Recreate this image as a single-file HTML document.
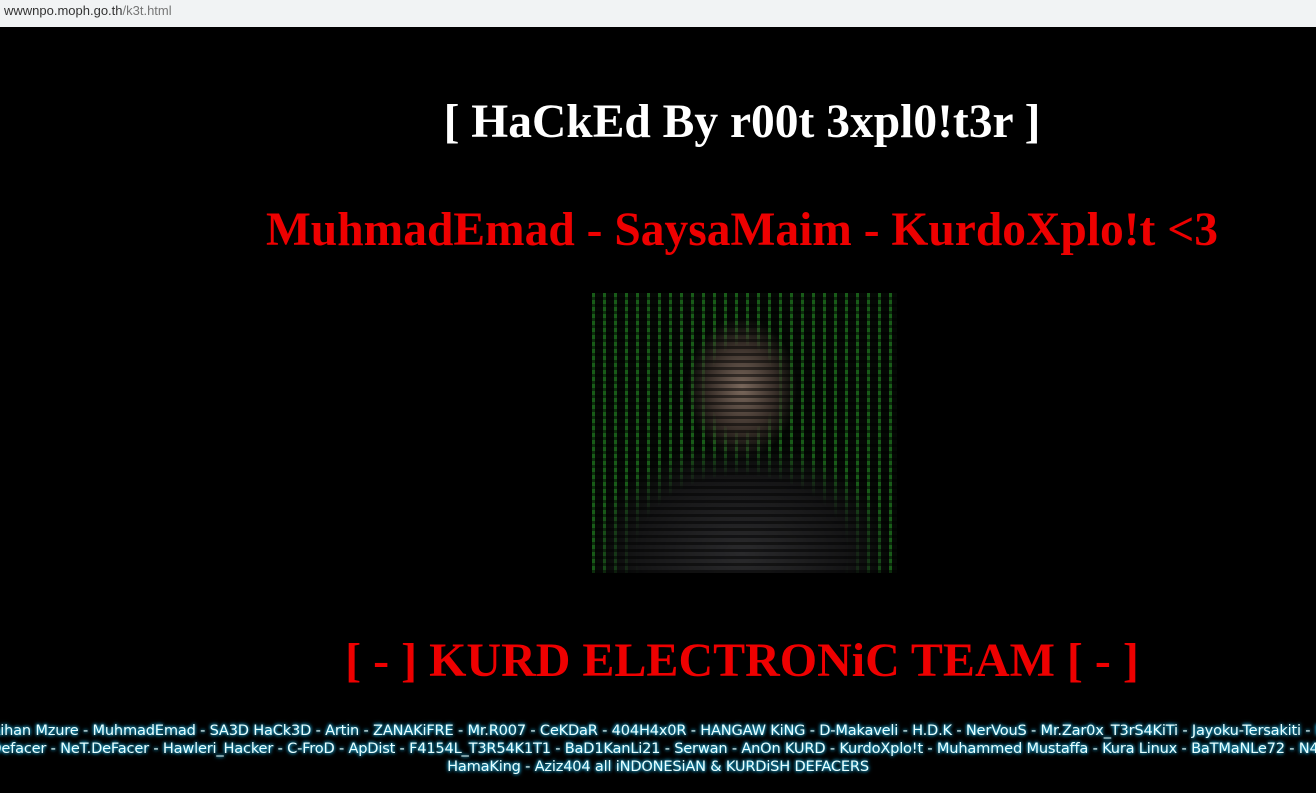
<!DOCTYPE html>
<html><head><style>
body{margin:0;width:1316px;height:793px;background:#000;overflow:hidden;font-family:"Liberation Serif",serif;position:relative}
.bar{position:absolute;left:0;top:0;width:1316px;height:27px;background:#f1f3f4;font:13px "Liberation Sans",sans-serif;color:#333;line-height:22px;padding-left:4px;box-sizing:border-box}
.bar span{color:#777}
.t{position:absolute;left:0;width:1484px;text-align:center;font-weight:bold;white-space:nowrap}
.f{position:absolute;text-align:center;white-space:nowrap;font:14.6px "DejaVu Sans",sans-serif;color:#e8ffff;text-shadow:0 0 3px #3cf,0 0 5px #09c;letter-spacing:-0.2px}
.img{position:absolute;left:592px;top:293px;width:305px;height:280px;background:
radial-gradient(ellipse 55px 70px at 150px 95px,#7a685c 0%,#3a302a 60%,transparent 100%),
radial-gradient(ellipse 150px 110px at 150px 260px,#2a2a2c 0%,#151516 70%,transparent 100%),
repeating-linear-gradient(90deg,rgba(40,160,40,.55) 0 3px,transparent 3px 11px),
#050805;overflow:hidden}
.img:after{content:"";position:absolute;inset:0;background:repeating-linear-gradient(0deg,#000 0 3px,transparent 3px 7px);opacity:.5}
</style></head><body>
<div class="bar">wwwnpo.moph.go.th<span>/k3t.html</span></div>
<div class="t" style="top:95px;font-size:47.5px;color:#fff">[ HaCkEd By r00t 3xpl0!t3r ]</div>
<div class="t" style="top:203px;font-size:47.5px;color:#e00">MuhmadEmad - SaysaMaim - KurdoXplo!t &lt;3</div>
<div class="img"></div>
<div class="t" style="top:633px;font-size:48px;color:#e00">[ - ] KURD ELECTRONiC TEAM [ - ]</div>
<div class="f" style="top:722px;left:-342px;width:2000px">Aihan Mzure - MuhmadEmad - SA3D HaCk3D - Artin - ZANAKiFRE - Mr.R007 - CeKDaR - 404H4x0R - HANGAW KiNG - D-Makaveli - H.D.K - NerVouS - Mr.Zar0x_T3rS4KiTi - Jayoku-Tersakiti - N</div>
<div class="f" style="top:740px;left:-342px;width:2000px">Defacer - NeT.DeFacer - Hawleri_Hacker - C-FroD - ApDist - F4154L_T3R54K1T1 - BaD1KanLi21 - Serwan - AnOn KURD - KurdoXplo!t - Muhammed Mustaffa - Kura Linux - BaTMaNLe72 - N4_</div>
<div class="f" style="top:758px;left:-342px;width:2000px">HamaKing - Aziz404 all iNDONESiAN &amp; KURDiSH DEFACERS</div>
</body></html>
